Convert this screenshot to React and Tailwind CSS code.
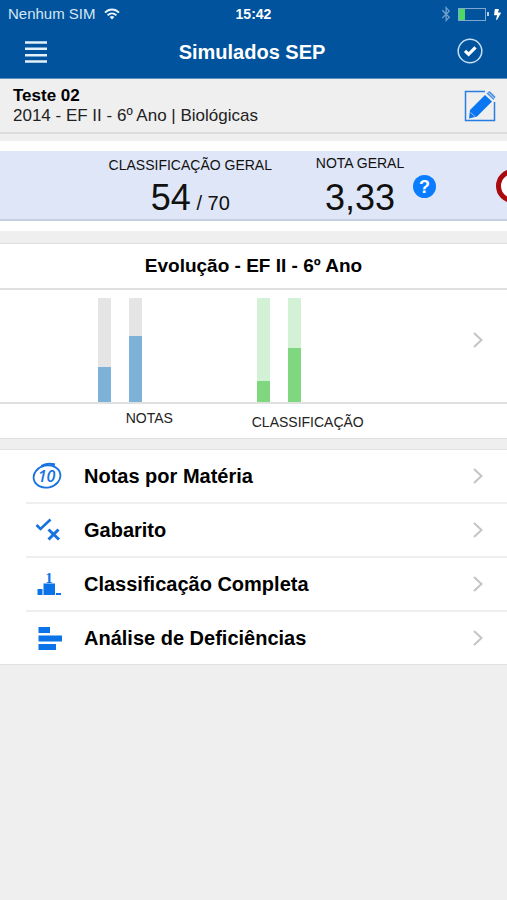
import { useState } from "react";
import { FaBluetoothB, FaBolt } from "react-icons/fa";

const NOTAS = [34, 63];
const CLASIFICACOES = [20, 52];

const IconeWifi = () => (
    <svg viewBox="0 0 16 12" className="h-3 w-4" fill="none" stroke="#e6f2fc" strokeWidth="1.900">
        <path d="M1 4.600C5 0.400 11 0.400 15 4.600" />
        <path d="M3.600 7.400C6.200 4.800 9.800 4.800 12.400 7.400" />
        <path d="M5.600 8.900C7 7.700 9 7.700 10.400 8.900L8 11.600Z" fill="#e6f2fc" stroke="none" />
    </svg>
);

const IconeNotas = () => (
    <svg viewBox="0 0 30 28" className="h-7 w-[30px]" fill="none" stroke="#1673e0" strokeLinecap="round">
        <ellipse cx="15" cy="14.500" rx="13.500" ry="11" transform="rotate(-12 15 14.500)" strokeWidth="1.800" />
        <path d="M10 3.600C14 1.600 18 1.400 22 2.300L21.500 4" strokeWidth="2" />
        <text
            x="14.500"
            y="20.300"
            textAnchor="middle"
            fill="#1673e0"
            stroke="none"
            className="font-['Open_Sans',sans-serif] text-base font-semibold italic"
        >
            10
        </text>
    </svg>
);

const IconeGabarito = () => (
    <svg viewBox="0 0 30 28" className="h-7 w-[30px]" fill="none" stroke="#1673e0">
        <path d="M4.500 9L8.500 13L18.500 3.500" strokeWidth="2.600" />
        <path d="M16.500 13.500L27 23.500M26.500 13.500L16.500 23.500" strokeWidth="3" />
    </svg>
);

const IconeClassificacao = () => (
    <svg viewBox="0 0 30 28" className="h-7 w-[30px]" fill="#0a73e8">
        <text x="17" y="12.500" textAnchor="middle" className="font-['Liberation_Serif',serif] text-[15px] font-bold">
            1
        </text>
        <rect x="11.500" y="13.500" width="11.500" height="11.500" />
        <rect x="5.500" y="19" width="5" height="6" />
        <rect x="24" y="23" width="5" height="2" />
    </svg>
);

const IconeDeficiencias = () => (
    <svg viewBox="0 0 30 28" className="h-7 w-[30px]" fill="#0a73e8">
        <rect x="6.500" y="3" width="11.500" height="6" />
        <rect x="6.500" y="11.500" width="23.500" height="6" />
        <rect x="6.500" y="20" width="17.500" height="6" />
    </svg>
);

const Seta = () => (
    <svg viewBox="0 0 10 16" className="h-4 w-[10px] shrink-0" fill="none" stroke="#c4c4c6" strokeWidth="2">
        <path d="M1 1L8.500 8L1 15" />
    </svg>
);

const Barras = ({ valores, fundo, cor }) => (
    <div className="flex flex-1 gap-[18px] pl-7">
        {valores.map((valor, i) => (
            <div key={i} className={`flex h-[104px] w-[13px] flex-col justify-end ${fundo}`}>
                <div className={cor} style={{ height: `${valor}%` }} />
            </div>
        ))}
    </div>
);

const OPCOES = [
    { id: "notas", titulo: "Notas por Matéria", Icone: IconeNotas },
    { id: "gabarito", titulo: "Gabarito", Icone: IconeGabarito },
    { id: "classificacao", titulo: "Classificação Completa", Icone: IconeClassificacao },
    { id: "deficiencias", titulo: "Análise de Deficiências", Icone: IconeDeficiencias }
];

const App = () => {
    const [concluido, setConcluido] = useState(true);

    return (
        <div className="min-h-screen bg-[#efefef] font-['Liberation_Sans',Arial,sans-serif] text-black">

            {/* CABEÇALHO */}
            <header className="border-b border-[#5c8fbe] bg-[#00539c] text-white">
                <div className="grid h-7 grid-cols-3 items-center px-2">
                    <div className="flex items-center gap-2 text-[15px] text-[#d5e6f5]">
                        Nenhum SIM
                        <IconeWifi />
                    </div>
                    <div className="text-center text-sm font-bold">15:42</div>
                    <div className="-mr-1 flex items-center justify-end gap-1">
                        <FaBluetoothB className="text-base text-[#6fa0cd]" />
                        <div className="flex items-center gap-px">
                            <div className="h-[13px] w-7 border border-[#7fa9d0]">
                                <div className="h-full w-[6px] bg-[#4cd964]" />
                            </div>
                            <div className="h-1 w-[2px] bg-[#b5cfe6]" />
                        </div>
                        <FaBolt className="-ml-px text-[11px]" />
                    </div>
                </div>

                <div className="flex h-[50px] items-center justify-between pr-6 pb-[2px] pl-[25px]">
                    <button type="button" aria-label="Menu" className="w-[22px]">
                        <svg viewBox="0 0 22 22" className="h-[22px] w-[22px]" stroke="#e3f1fc" strokeWidth="2.400">
                            <path d="M0 1.500H22M0 7.800H22M0 14.200H22M0 20.500H22" />
                        </svg>
                    </button>
                    <h1 className="text-xl font-bold">Simulados SEP</h1>
                    <button type="button" aria-label="Concluir" onClick={() => setConcluido(!concluido)}>
                        <svg viewBox="0 0 26 26" className="h-[26px] w-[26px] overflow-visible" fill="none" stroke="#fff">
                            <circle cx="13" cy="12" r="11.800" stroke="#c3e0f7" strokeWidth="1.500" />
                            {concluido && <path d="M8 11.800L11.600 15.300L18.500 8.300" strokeWidth="3.200" />}
                        </svg>
                    </button>
                </div>
            </header>

            {/* PROVA SELECIONADA */}
            <section className="flex h-[55px] items-center justify-between border-b-2 border-[#dcdcdc] pr-[11px] pl-[13px]">
                <div>
                    <h2 className="text-[17px] leading-5 font-bold">Teste 02</h2>
                    <p className="text-[17px] leading-5 text-[#222]">2014 - EF II - 6º Ano | Biológicas</p>
                </div>
                <button type="button" aria-label="Editar">
                    <svg viewBox="0 0 32 32" className="h-8 w-8" fill="none">
                        <path d="M21 1.500H1.500V30.500H30.500V12" stroke="#2a7de0" strokeWidth="1.500" />
                        <path d="M6 20L21 5L28 11.500L13 26.500L5 28.500Z" fill="#0a76f2" />
                        <path d="M6.500 22.500L11 26.500" stroke="#8fc0f5" strokeWidth="1" />
                        <path d="M22.500 3.600L25.500 1L31.500 6.800L29.500 10Z" fill="#4a90e2" />
                        <path d="M24.500 2.800L30.200 8.500" stroke="#c5def8" strokeWidth="1" />
                    </svg>
                </button>
            </section>

            {/* RESUMO */}
            <section className="mt-[7px] bg-white py-[10px]">
                <div className="flex h-[70px] overflow-hidden border-b-2 border-[#c6cfe2] bg-[#dfe6f7]">
                    <div className="flex w-[285px] shrink-0 justify-end pt-1 pr-[13px]">
                        <div className="text-center text-[#111]">
                            <p className="text-sm leading-5">CLASSIFICAÇÃO GERAL</p>
                            <p className="text-4xl leading-[46px]">
                                54<span className="text-xl"> / 70</span>
                            </p>
                        </div>
                    </div>
                    <div className="w-[150px] shrink-0 text-center text-[#111]">
                        <p className="text-sm leading-6">NOTA GERAL</p>
                        <p className="text-4xl leading-[46px]">3,33</p>
                    </div>
                    <button
                        type="button"
                        aria-label="Ajuda"
                        className="-ml-[22px] mt-6 flex h-[23px] w-[23px] shrink-0 items-center justify-center rounded-full bg-[#0a7cff] text-lg font-bold text-white"
                    >
                        ?
                    </button>
                    <div className="mt-[18px] ml-[60px] h-[34px] w-[34px] shrink-0 rounded-full border-[5px] border-[#a80a10] bg-white" />
                </div>
            </section>

            {/* EVOLUÇÃO */}
            <section className="mt-3 border-y border-[#dedede] bg-white">
                <h2 className="border-b-2 border-[#e0e0e0] text-center text-[19px] leading-[44px] font-bold">
                    Evolução - EF II - 6º Ano
                </h2>
                <div className="flex border-b-2 border-[#e0e0e0] pt-2 pr-6 pl-[70px]">
                    <Barras valores={NOTAS} fundo="bg-[#e5e5e5]" cor="bg-[#7db1d8]" />
                    <Barras valores={CLASIFICACOES} fundo="bg-[#d3f1d5]" cor="bg-[#7fd77f]" />
                    <div className="flex w-24 justify-end pt-[34px]">
                        <Seta />
                    </div>
                </div>
                <div className="mt-[6px] mb-2 flex h-5 pr-[120px] pl-[70px] text-center text-[#222]">
                    <p className="flex-1 self-start text-sm leading-4">NOTAS</p>
                    <p className="flex-1 self-end text-sm leading-4">CLASSIFICAÇÃO</p>
                </div>
            </section>

            {/* OPÇÕES */}
            <nav className="mt-[10px] border-y border-[#e2e2e2] bg-white">
                <ul className="divide-y-2 divide-[#efefef] pl-[26px]">
                    {OPCOES.map(({ id, titulo, Icone }) => (
                        <li key={id}>
                            <a href={`#${id}`} className="flex h-[52px] items-center pr-6 pl-[6px]">
                                <Icone />
                                <span className="ml-[22px] flex-1 text-xl font-bold">{titulo}</span>
                                <Seta />
                            </a>
                        </li>
                    ))}
                </ul>
            </nav>

        </div>
    );
};

export default App;
